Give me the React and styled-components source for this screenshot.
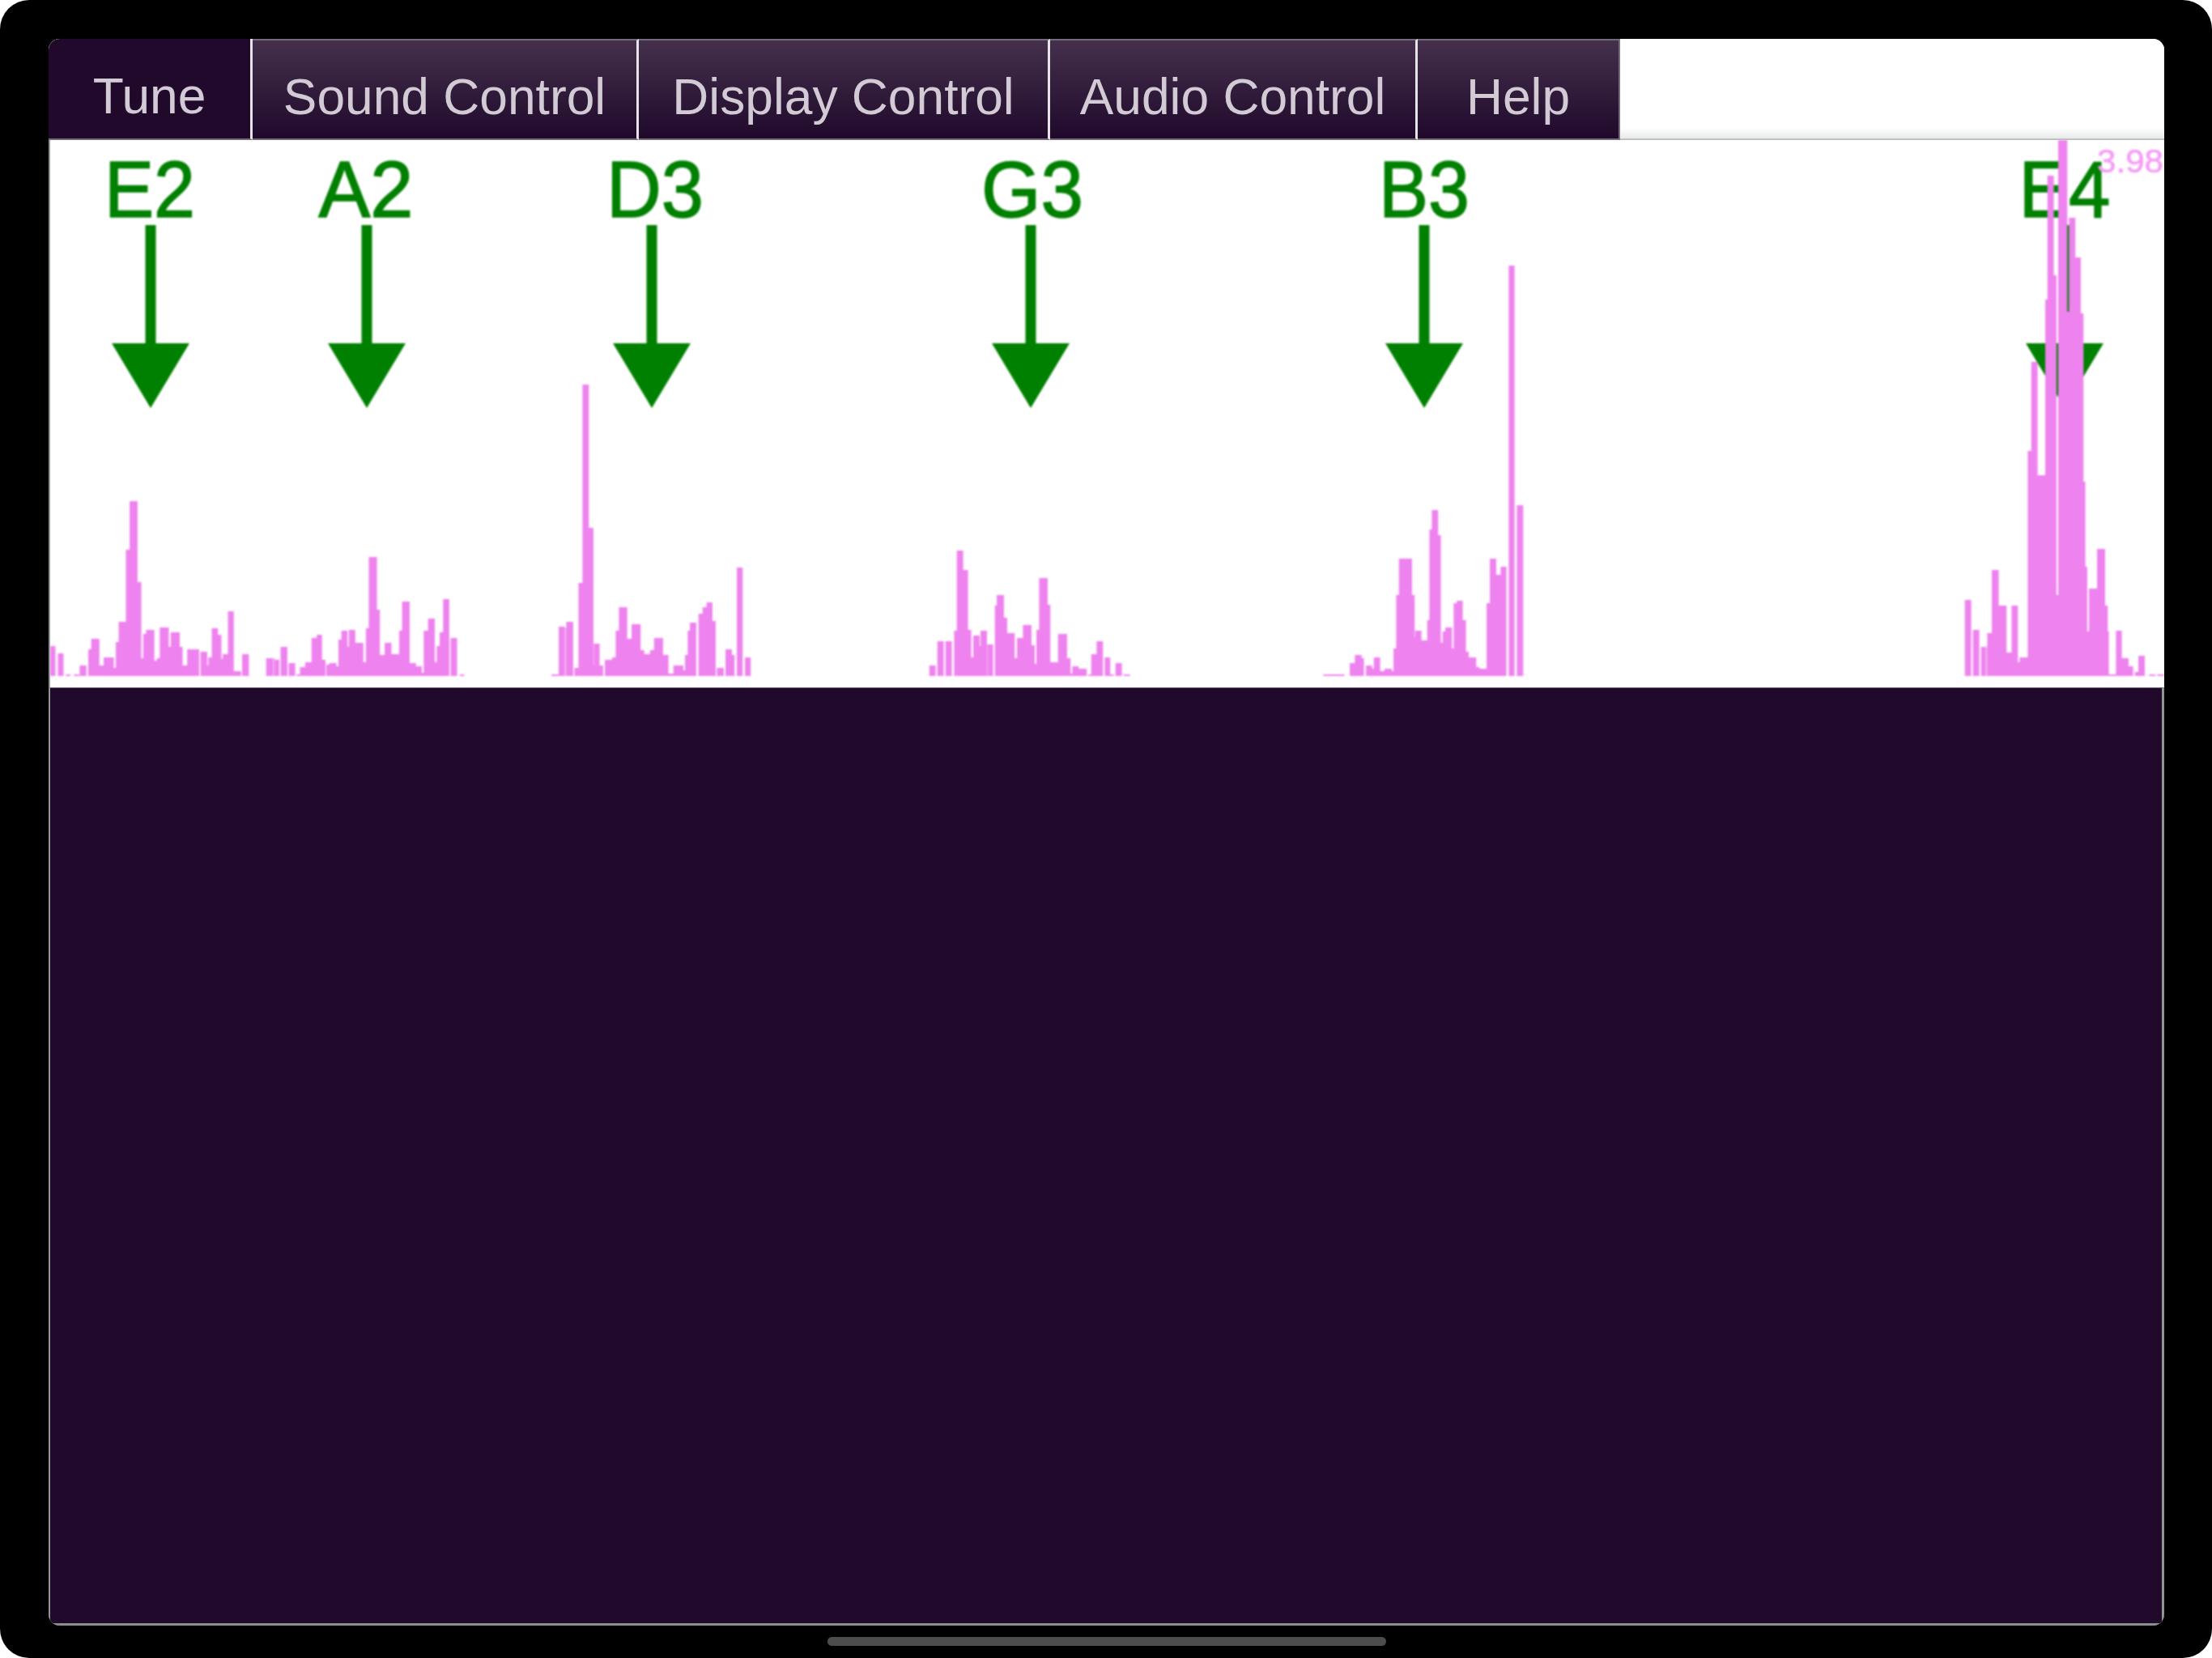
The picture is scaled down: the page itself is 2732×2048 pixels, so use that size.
import React from 'react';
import styled, { createGlobalStyle } from 'styled-components';

const GlobalStyle = createGlobalStyle`
  html, body {
    margin: 0;
    background: #fff;
    font-family: "Liberation Sans", Arial, sans-serif;
  }
`;

const DARK = '#20092b';
const BASE_Y = 835;

const Bezel = styled.div`
  box-sizing: border-box;
  width: 2732px;
  height: 2048px;
  padding: 48px 59px 0 60px;
  background: #000;
  border-radius: 36px;
  display: flex;
  flex-direction: column;
  align-items: center;
`;

const Screen = styled.div`
  width: 2613px;
  height: 1960px;
  flex: none;
  display: flex;
  flex-direction: column;
  border-radius: 14px;
  overflow: hidden;
  background: #fff;
`;

const HomeBar = styled.div`
  width: 690px;
  height: 11px;
  flex: none;
  margin-top: 14px;
  background: #4d4d4d;
  border-radius: 6px;
`;

const Nav = styled.nav`
  height: 125px;
  flex: none;
  display: flex;
  background: linear-gradient(to bottom, #fff 0, #fff 88%, #e9eaea 98%, #b9bdbd 99%, #b9bdbd 100%);
`;

const Tab = styled.div`
  box-sizing: border-box;
  width: ${(p) => p.$width}px;
  flex: none;
  display: flex;
  align-items: center;
  justify-content: center;
  padding-top: 17px;
  font-size: 62.3px;
  color: #d2cbd5;
  white-space: nowrap;
  border-right: ${(p) => (p.$last ? '2px solid #736a7c' : '3px solid #e6e4e8')};
  border-top: ${(p) => (p.$active ? '0' : '2px solid #736a7c')};
  border-bottom: 2px solid #736a7c;
  background: ${(p) => (p.$active ? DARK : `linear-gradient(to bottom, #44304c 0%, ${DARK} 100%)`)};
`;

const Chart = styled.div`
  position: relative;
  height: 676px;
  flex: none;
  background: #fff;
  border-left: 2px solid #8f9696;
  overflow: hidden;
`;

const ChartSvg = styled.svg`
  display: block;
  width: 2611px;
  height: 676px;
  filter: blur(0.9px);
`;

const NoteLabel = styled.text`
  font-family: "Liberation Sans", Arial, sans-serif;
  font-size: 98px;
  fill: #008000;
  stroke: #008000;
  stroke-width: 1.6px;
`;

const Reading = styled.text`
  font-family: "Liberation Sans", Arial, sans-serif;
  font-size: 41px;
  fill: #f59cf5;
  stroke: #f59cf5;
  stroke-width: 0.6px;
`;

const Panel = styled.div`
  flex: 1;
  background: ${DARK};
  border-top: 1px solid #7a6f80;
  border-left: 2px solid #8f9696;
  border-right: 3px solid #8f9696;
  border-bottom: 3px solid #8a9090;
`;

const tabs = [
  { label: 'Tune', width: 252, active: true },
  { label: 'Sound Control', width: 477 },
  { label: 'Display Control', width: 508 },
  { label: 'Audio Control', width: 454 },
  { label: 'Help', width: 250, last: true },
];

const notes = [
  { name: 'E2', x: 185, shaft: 186, width: 112 },
  { name: 'A2', x: 452, shaft: 453, width: 117 },
  { name: 'D3', x: 809, shaft: 805, width: 120 },
  { name: 'G3', x: 1275, shaft: 1273, width: 126 },
  { name: 'B3', x: 1759, shaft: 1759, width: 112 },
  { name: 'E4', x: 2550, shaft: 2550, width: 113 },
];

// bars measured from crops of the spectrum: [from, to, height, opacity?]
const clusters = [
  {
    origin: 40,
    scale: 2.8,
    bars: [
      [62, 78, 37], [90, 106, 28], [118, 130, 2], [145, 160, 2], [165, 185, 13], [195, 212, 33], [205, 230, 46],
      [232, 245, 13], [248, 280, 23], [280, 290, 10], [290, 300, 42], [300, 325, 67], [325, 338, 156], [338, 362, 216],
      [362, 375, 116], [375, 385, 22], [385, 395, 52], [395, 420, 57], [420, 432, 19], [432, 442, 22], [442, 470, 60],
      [470, 480, 36], [480, 508, 54], [508, 518, 36], [518, 537, 13], [537, 575, 33], [583, 603, 30], [603, 610, 13],
      [610, 622, 23], [622, 640, 59], [640, 652, 51], [652, 662, 21], [660, 678, 27], [678, 695, 80], [698, 720, 6],
      [727, 747, 27],
      [810, 830, 22], [830, 838, 22, 0.6], [838, 852, 20], [860, 880, 36], [888, 907, 16], [915, 925, 2], [927, 945, 11],
      [945, 965, 17], [967, 985, 47], [985, 1000, 51], [1000, 1012, 20], [1018, 1028, 14], [1028, 1050, 16], [1050, 1060, 12],
      [1060, 1070, 45], [1070, 1088, 56], [1088, 1096, 36], [1096, 1115, 57], [1115, 1143, 41], [1143, 1155, 17],
      [1155, 1165, 59], [1165, 1190, 147], [1190, 1200, 82], [1200, 1220, 26], [1220, 1240, 41], [1240, 1270, 27],
      [1270, 1280, 56], [1280, 1303, 92], [1303, 1325, 16], [1325, 1345, 12], [1345, 1355, 4], [1355, 1370, 56],
      [1370, 1390, 71], [1390, 1400, 17], [1400, 1410, 37], [1410, 1422, 54], [1422, 1440, 95], [1448, 1467, 47],
      [1480, 1492, 2],
    ],
  },
  {
    origin: 660,
    scale: 3,
    bars: [
      [65, 88, 2], [92, 110, 61], [110, 120, 60, 0.6], [120, 142, 67], [150, 165, 10], [165, 180, 115], [180, 200, 360],
      [200, 217, 183], [217, 222, 13], [222, 240, 40], [240, 253, 13], [263, 290, 20], [290, 303, 23], [303, 315, 56],
      [315, 342, 85], [342, 362, 46], [362, 392, 64], [392, 405, 32], [405, 430, 27], [430, 445, 32], [445, 475, 47],
      [475, 495, 26], [495, 517, 3], [517, 550, 13], [550, 560, 7], [560, 570, 26], [570, 578, 56], [578, 598, 66],
      [610, 625, 77], [625, 640, 85], [640, 658, 91], [658, 670, 68], [678, 700, 10], [710, 730, 33], [730, 740, 26],
      [752, 770, 134], [782, 800, 23],
    ],
  },
  {
    origin: 1130,
    scale: 3,
    bars: [
      [55, 75, 13], [85, 105, 43], [115, 135, 43], [147, 157, 56], [157, 177, 155], [177, 195, 131], [195, 207, 57],
      [207, 218, 23], [218, 238, 50], [238, 245, 37], [245, 265, 56], [265, 275, 39, 0.6], [272, 288, 39], [298, 305, 87],
      [305, 328, 100], [328, 340, 72], [340, 368, 53], [368, 380, 22], [380, 402, 47], [402, 430, 63], [430, 442, 38],
      [442, 452, 15], [452, 462, 57], [462, 490, 121], [490, 500, 88], [500, 512, 17], [512, 532, 17], [532, 562, 52],
      [562, 575, 22], [578, 585, 3], [585, 605, 12], [605, 635, 9], [645, 655, 2], [655, 675, 27], [675, 695, 43],
      [705, 722, 23], [722, 735, 2], [745, 765, 16], [775, 795, 2],
    ],
  },
  {
    origin: 1620,
    scale: 3,
    bars: [
      [45, 120, 2], [143, 162, 16], [162, 183, 26], [183, 192, 22], [203, 222, 13], [222, 232, 9], [232, 252, 23],
      [252, 272, 6], [272, 295, 9], [295, 305, 6], [305, 315, 34], [315, 325, 100], [325, 370, 145], [370, 380, 100],
      [380, 385, 48], [385, 405, 56], [405, 430, 44], [430, 438, 69], [438, 447, 181], [447, 467, 205], [467, 477, 174],
      [477, 487, 41], [487, 497, 55], [497, 518, 60], [518, 528, 34], [528, 540, 90], [540, 558, 93], [558, 570, 69],
      [570, 580, 30], [580, 608, 23], [608, 620, 11], [620, 650, 9], [650, 662, 90], [662, 682, 145], [682, 702, 125],
      [702, 720, 135], [732, 750, 507], [762, 782, 211],
    ],
  },
  {
    origin: 2350,
    scale: 3,
    bars: [
      [232, 252, 94], [262, 282, 57], [292, 305, 36], [305, 315, 36, 0.6], [315, 332, 53], [332, 354, 131], [354, 383, 87],
      [383, 405, 29], [405, 425, 87], [425, 435, 17], [435, 465, 23], [465, 478, 278], [478, 498, 388], [498, 505, 248],
      [505, 530, 248], [530, 540, 465], [538, 558, 618], [558, 568, 495], [568, 578, 100], [578, 608, 662], [608, 618, 450],
      [618, 638, 566], [638, 658, 517], [658, 668, 448], [668, 675, 240], [675, 682, 135], [682, 692, 55], [692, 722, 108],
      [722, 748, 157], [748, 758, 87], [758, 762, 55], [762, 790, 2], [792, 810, 56], [810, 835, 22], [835, 852, 12],
      [862, 875, 5], [875, 895, 25], [915, 935, 2], [945, 968, 2],
    ],
  },
];

function Arrow({ x }) {
  return (
    <g fill="#008000">
      <rect x={x - 6.5} y={278} width={13} height={150} />
      <polygon points={`${x - 48},424 ${x + 48},424 ${x},504`} />
    </g>
  );
}

function Spectrum() {
  return (
    <g fill="#ee82ee">
      {clusters.map((cluster) =>
        cluster.bars.map(([from, to, height, opacity]) => (
          <rect
            key={`${cluster.origin}-${from}`}
            x={cluster.origin + from / cluster.scale - 0.6}
            y={BASE_Y - height}
            width={(to - from) / cluster.scale + 1.2}
            height={height}
            opacity={opacity}
          />
        )),
      )}
    </g>
  );
}

export default function App() {
  return (
    <>
      <GlobalStyle />
      <Bezel>
        <Screen>
          <Nav>
            {tabs.map((tab) => (
              <Tab key={tab.label} $width={tab.width} $active={tab.active} $last={tab.last}>
                {tab.label}
              </Tab>
            ))}
          </Nav>
          <Chart>
            <ChartSvg viewBox="62 173 2611 676">
              {notes.map((note) => (
                <g key={note.name}>
                  <NoteLabel
                    x={note.x}
                    y={268}
                    textAnchor="middle"
                    textLength={note.width}
                    lengthAdjust="spacingAndGlyphs"
                  >
                    {note.name}
                  </NoteLabel>
                  <Arrow x={note.shaft} />
                </g>
              ))}
              <Spectrum />
              <Reading x={2672} y={213} textAnchor="end" textLength={82} lengthAdjust="spacingAndGlyphs">
                3.98
              </Reading>
            </ChartSvg>
          </Chart>
          <Panel />
        </Screen>
        <HomeBar />
      </Bezel>
    </>
  );
}
